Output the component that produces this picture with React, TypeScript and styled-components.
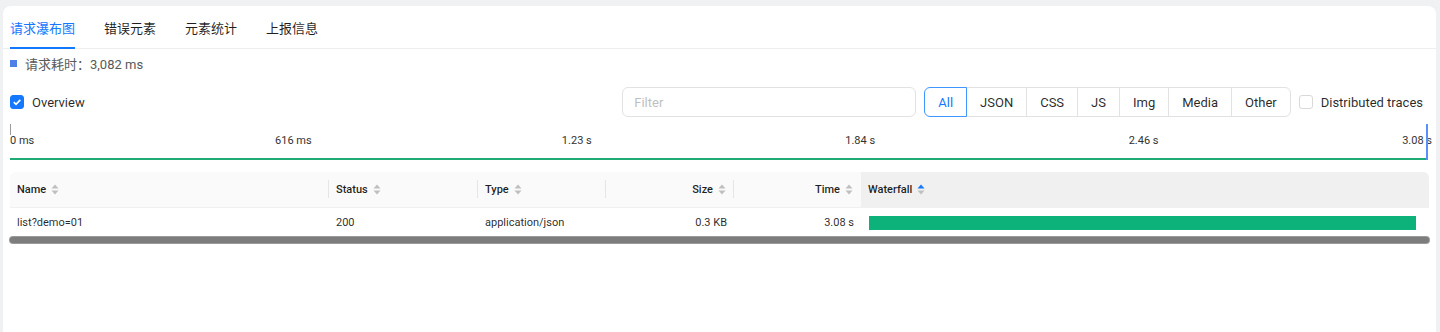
import React from "react";
import styled, { createGlobalStyle } from "styled-components";

const GlobalStyle = createGlobalStyle`
  html, body { margin: 0; padding: 0; }
  body {
    background: #f0f1f3;
    font-family: Roboto, "Noto Sans CJK SC", sans-serif;
    color: rgba(0, 0, 0, 0.88);
    overflow: hidden;
  }
`;

const Page = styled.div`
  padding: 6px 4px 0 3px;
`;

const Card = styled.div`
  background: #fff;
  border-radius: 8px 8px 0 0;
  min-height: 340px;
`;

const TabBar = styled.div`
  display: flex;
  gap: 29px;
  height: 42px;
  padding: 0 7px;
  border-bottom: 1px solid #eeeeee;
`;

const Tab = styled.div<{ $active?: boolean }>`
  position: relative;
  display: flex;
  align-items: center;
  font-size: 13px;
  font-family: "Noto Sans CJK SC", sans-serif;
  color: ${(p) => (p.$active ? "#1677ff" : "rgba(0,0,0,0.88)")};
  &::after {
    content: "";
    position: absolute;
    left: 0;
    right: 0;
    bottom: -1px;
    height: 2px;
    background: ${(p) => (p.$active ? "#1677ff" : "transparent")};
  }
`;

const Body = styled.div`
  padding: 0 7px 0 7px;
`;

const Summary = styled.div`
  display: flex;
  align-items: center;
  gap: 8px;
  height: 18px;
  margin-top: 5px;
  font-size: 13px;
  color: #595959;
`;

const Square = styled.span`
  width: 7px;
  height: 7px;
  background: #4f80e6;
`;

const CjkText = styled.span`
  font-family: Roboto, "Noto Sans CJK SC", sans-serif;
`;

const Toolbar = styled.div`
  display: flex;
  align-items: center;
  height: 30px;
  margin-top: 15px;
  margin-right: 6px;
`;

const CheckLabel = styled.label`
  display: flex;
  align-items: center;
  gap: 8px;
  font-size: 13px;
  color: rgba(0, 0, 0, 0.85);
`;

const Box = styled.span<{ $checked?: boolean }>`
  display: flex;
  align-items: center;
  justify-content: center;
  width: 14px;
  height: 14px;
  box-sizing: border-box;
  border-radius: 3px;
  border: 1px solid ${(p) => (p.$checked ? "#1677ff" : "#d9d9d9")};
  background: ${(p) => (p.$checked ? "#1677ff" : "#fff")};
`;

const Spacer = styled.div`
  flex: 1;
`;

const FilterInput = styled.div`
  width: 294px;
  height: 30px;
  box-sizing: border-box;
  border: 1px solid #e2e2e2;
  border-radius: 6px;
  padding: 0 11px;
  display: flex;
  align-items: center;
  font-size: 13px;
  color: #bfbfbf;
  margin-right: 8px;
`;

const Segmented = styled.div`
  display: flex;
  height: 30px;
  margin-right: 8px;
`;

const SegButton = styled.div<{ $active?: boolean; $first?: boolean; $last?: boolean }>`
  display: flex;
  align-items: center;
  padding: 0 13px;
  font-size: 13px;
  box-sizing: border-box;
  border: 1px solid ${(p) => (p.$active ? "#4096ff" : "#e2e2e2")};
  margin-left: ${(p) => (p.$first ? "0" : "-1px")};
  position: relative;
  z-index: ${(p) => (p.$active ? 1 : 0)};
  color: ${(p) => (p.$active ? "#1677ff" : "rgba(0,0,0,0.85)")};
  border-radius: ${(p) => (p.$first ? "6px 0 0 6px" : p.$last ? "0 6px 6px 0" : "0")};
`;

const Ruler = styled.div`
  position: relative;
  height: 36px;
  margin-top: 5px;
  margin-right: 2px;
  border-bottom: 2px solid #1faa76;
`;

const TickLabel = styled.span`
  position: absolute;
  top: 12px;
  font-size: 11px;
  color: #333;
  white-space: nowrap;
`;

const LeftHandle = styled.span`
  position: absolute;
  left: 0;
  top: 2px;
  width: 1px;
  height: 11px;
  background: #9a9a9a;
`;

const RightHandle = styled.span`
  position: absolute;
  right: -1px;
  top: 2px;
  width: 2px;
  bottom: -2px;
  background: #5b8ff9;
`;

const Table = styled.div`
  margin-top: 12px;
  font-size: 11px;
`;

const COLS = "319px 149px 128px 128px 127px 1fr";

const HeadRow = styled.div`
  display: grid;
  grid-template-columns: ${COLS};
  height: 35px;
  background: #fafafa;
  border-radius: 6px 6px 0 0;
  overflow: hidden;
  border-bottom: 1px solid #f0f0f0;
`;

const HeadCell = styled.div<{ $right?: boolean; $sep?: boolean; $sorted?: boolean }>`
  position: relative;
  display: flex;
  align-items: center;
  justify-content: ${(p) => (p.$right ? "flex-end" : "flex-start")};
  gap: 5px;
  padding: 0 8px 0 7px;
  font-weight: 500;
  color: rgba(0, 0, 0, 0.88);
  background: ${(p) => (p.$sorted ? "#f0f0f0" : "transparent")};
  &::after {
    content: "";
    display: ${(p) => (p.$sep ? "block" : "none")};
    position: absolute;
    right: 0;
    top: 8px;
    width: 1px;
    height: 18px;
    background: #e6e6e6;
  }
`;

const DataRow = styled.div`
  display: grid;
  grid-template-columns: ${COLS};
  height: 29px;
`;

const Cell = styled.div<{ $right?: boolean }>`
  display: flex;
  align-items: center;
  justify-content: ${(p) => (p.$right ? "flex-end" : "flex-start")};
  padding: 0 7px 0 7px;
  color: rgba(0, 0, 0, 0.85);
`;

const BarCell = styled.div`
  display: flex;
  align-items: center;
  padding: 0 13px 0 8px;
`;

const Bar = styled.div`
  height: 14px;
  background: #0db27a;
`;

const ScrollBar = styled.div`
  height: 6px;
  border-radius: 3px;
  background: #7d7d7d;
  box-shadow: 0 0 0 1px #9a9a9a;
`;

const Sorter = ({ up }: { up?: boolean }) => (
  <svg width="8" height="11" viewBox="0 0 8 11">
    <path d="M4 0.5 L7.5 4.5 L0.5 4.5 Z" fill={up ? "#1677ff" : "#bfbfbf"} />
    <path d="M4 10.5 L7.5 6.5 L0.5 6.5 Z" fill="#bfbfbf" />
  </svg>
);

const Check = () => (
  <svg width="10" height="10" viewBox="0 0 10 10">
    <path d="M1.8 5.2 L4 7.3 L8.3 2.8" fill="none" stroke="#fff" strokeWidth="1.7" />
  </svg>
);

const ticks = [
  { label: "0 ms", pct: 0 },
  { label: "616 ms", pct: 20 },
  { label: "1.23 s", pct: 40 },
  { label: "1.84 s", pct: 60 },
  { label: "2.46 s", pct: 80 },
  { label: "3.08 s", pct: 100 },
];

const filters = ["All", "JSON", "CSS", "JS", "Img", "Media", "Other"];

export default function App() {
  return (
    <>
      <GlobalStyle />
      <Page>
        <Card>
          <TabBar>
            <Tab $active>请求瀑布图</Tab>
            <Tab>错误元素</Tab>
            <Tab>元素统计</Tab>
            <Tab>上报信息</Tab>
          </TabBar>
          <Body>
            <Summary>
              <Square />
              <CjkText>请求耗时：3,082 ms</CjkText>
            </Summary>
            <Toolbar>
              <CheckLabel>
                <Box $checked>
                  <Check />
                </Box>
                Overview
              </CheckLabel>
              <Spacer />
              <FilterInput>Filter</FilterInput>
              <Segmented>
                {filters.map((f, i) => (
                  <SegButton
                    key={f}
                    $active={i === 0}
                    $first={i === 0}
                    $last={i === filters.length - 1}
                  >
                    {f}
                  </SegButton>
                ))}
              </Segmented>
              <CheckLabel>
                <Box />
                Distributed traces
              </CheckLabel>
            </Toolbar>
            <Ruler>
              <LeftHandle />
              {ticks.map((t, i) => (
                <TickLabel
                  key={t.label}
                  style={{
                    left: `${t.pct}%`,
                    transform:
                      i === 0
                        ? "none"
                        : i === ticks.length - 1
                        ? "translateX(calc(-100% + 5px))"
                        : "translateX(-50%)",
                  }}
                >
                  {t.label}
                </TickLabel>
              ))}
              <RightHandle />
            </Ruler>
            <Table>
              <HeadRow>
                <HeadCell $sep>
                  Name <Sorter />
                </HeadCell>
                <HeadCell $sep>
                  Status <Sorter />
                </HeadCell>
                <HeadCell $sep>
                  Type <Sorter />
                </HeadCell>
                <HeadCell $sep $right>
                  Size <Sorter />
                </HeadCell>
                <HeadCell $right>
                  Time <Sorter />
                </HeadCell>
                <HeadCell $sorted>
                  Waterfall <Sorter up />
                </HeadCell>
              </HeadRow>
              <DataRow>
                <Cell>list?demo=01</Cell>
                <Cell>200</Cell>
                <Cell>application/json</Cell>
                <Cell $right>0.3 KB</Cell>
                <Cell $right>3.08 s</Cell>
                <BarCell>
                  <Bar style={{ width: "100%" }} />
                </BarCell>
              </DataRow>
              <ScrollBar />
            </Table>
          </Body>
        </Card>
      </Page>
    </>
  );
}
